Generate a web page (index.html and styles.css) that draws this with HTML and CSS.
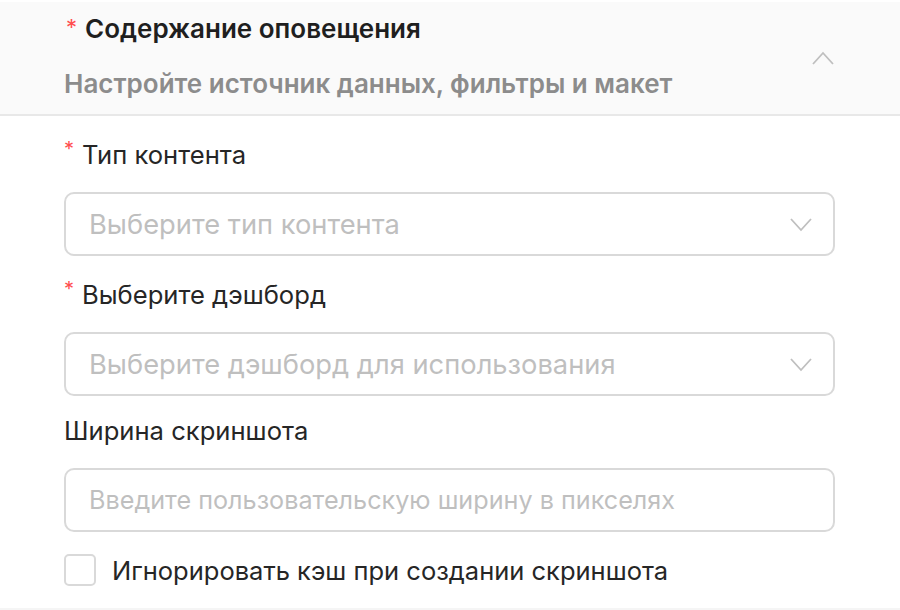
FILE: index.html
```html
<!DOCTYPE html>
<html lang="ru">
<head>
<meta charset="utf-8">
<link rel="stylesheet" href="styles.css">
</head>
<body>
<div class="panel">
  <div class="header">
    <div class="header-text">
      <div class="title"><span class="req">*</span>Содержание оповещения</div>
      <div class="subtitle">Настройте источник данных, фильтры и макет</div>
    </div>
    <svg class="chev-up" width="22" height="14" viewBox="0 0 22 14"><path d="M1 13 L11 2 L21 13" fill="none" stroke="#bfbfbf" stroke-width="1.8"/></svg>
  </div>
  <div class="body">
    <div class="field field-first">
      <div class="label"><span class="req-s">*</span>Тип контента</div>
      <div class="control">
        <span class="ph ph-select">Выберите тип контента</span>
        <svg class="chev" width="22" height="14" viewBox="0 0 22 14"><path d="M1 1 L11 12 L21 1" fill="none" stroke="#bfbfbf" stroke-width="1.8"/></svg>
      </div>
    </div>
    <div class="field">
      <div class="label"><span class="req-s">*</span>Выберите дэшборд</div>
      <div class="control">
        <span class="ph ph-select">Выберите дэшборд для использования</span>
        <svg class="chev" width="22" height="14" viewBox="0 0 22 14"><path d="M1 1 L11 12 L21 1" fill="none" stroke="#bfbfbf" stroke-width="1.8"/></svg>
      </div>
    </div>
    <div class="field">
      <div class="label">Ширина скриншота</div>
      <div class="control">
        <span class="ph">Введите пользовательскую ширину в пикселях</span>
      </div>
    </div>
    <label class="check-row">
      <span class="box"></span>
      <span class="check-text">Игнорировать кэш при создании скриншота</span>
    </label>
  </div>
  <div class="footer-line"></div>
</div>
</body>
</html>
```
FILE: styles.css
```css
html, body {
  margin: 0;
  padding: 0;
  background: #ffffff;
}
body {
  font-family: Inter, "Noto Sans", sans-serif;
  color: #262626;
  width: 900px;
  height: 610px;
  overflow: hidden;
}
.panel {
  display: flex;
  flex-direction: column;
  height: 610px;
}
.header {
  margin-top: 2px;
  background: #fafafa;
  border-bottom: 2px solid #e8e8e8;
  height: 114px;
  box-sizing: border-box;
  display: flex;
  align-items: center;
  justify-content: space-between;
  padding: 0 66px 0 64px;
}
.header-text {
  display: flex;
  flex-direction: column;
  gap: 19px;
  align-self: flex-start;
  padding-top: 9px;
}
.title {
  font-size: 26px;
  font-weight: 600;
  line-height: 36px;
  color: #1f1f1f;
  display: flex;
  align-items: center;
}
.req {
  color: #ff4d4f;
  font-size: 22px;
  font-weight: 400;
  margin: 0 8px 0 2px;
  position: relative;
  top: -2px;
}
.subtitle {
  font-size: 26px;
  font-weight: 600;
  line-height: 36px;
  color: #8c8c8c;
}
.chev-up {
  display: block;
  margin-top: -1px;
}
.body {
  display: flex;
  flex-direction: column;
  padding: 21px 65px 0 64px;
}
.field {
  display: flex;
  flex-direction: column;
  margin-bottom: 17px;
}
.field-first {
  margin-bottom: 21px;
}
.label {
  font-size: 25.6px;
  line-height: 36px;
  color: #262626;
  margin-bottom: 19px;
  display: flex;
  align-items: center;
}
.req-s {
  color: #ff4d4f;
  font-size: 20px;
  margin-right: 8px;
  position: relative;
  top: -6px;
}
.control {
  height: 64px;
  box-sizing: border-box;
  border: 2px solid #d9d9d9;
  border-radius: 10px;
  display: flex;
  align-items: center;
  justify-content: space-between;
  padding: 0 21px 0 23px;
}
.ph {
  font-size: 25.2px;
  color: #bfbfbf;
}
.ph-select {
  font-size: 27.3px;
}
.chev {
  display: block;
  margin-top: 2px;
}
.check-row {
  display: flex;
  align-items: center;
  gap: 16px;
  margin-top: 5px;
}
.box {
  width: 32px;
  height: 32px;
  box-sizing: border-box;
  border: 2px solid #d9d9d9;
  border-radius: 5px;
  background: #fff;
}
.check-text {
  font-size: 25.5px;
  color: #262626;
}
.footer-line {
  margin-top: auto;
  height: 2px;
  background: #f5f5f5;
}
```
